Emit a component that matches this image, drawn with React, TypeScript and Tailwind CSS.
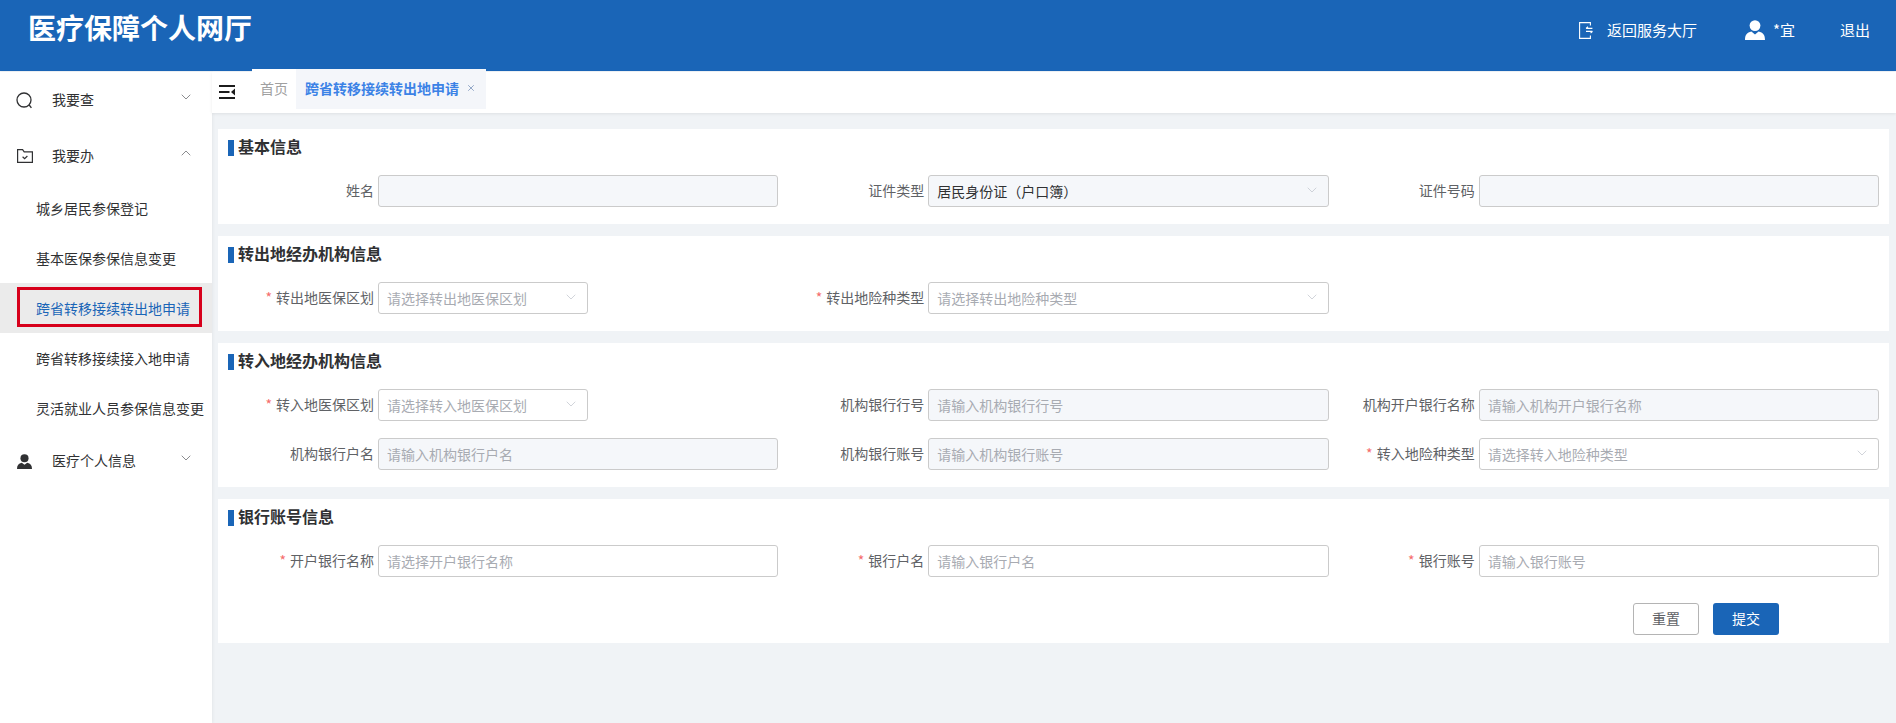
import { ChevronDown, ChevronUp, X } from "lucide-react";

const font = { fontFamily: '"Noto Sans CJK SC", "Noto Sans", sans-serif' };

function SearchIcon() {
  return (
    <svg viewBox="0 0 17 17" className="h-[17px] w-[17px]" fill="none" stroke="#303133" strokeWidth="1.3">
      <circle cx="8" cy="8" r="7" />
      <path d="M13.2 13 15.4 15.8" />
    </svg>
  );
}

function FolderIcon() {
  return (
    <svg viewBox="0 0 16 14" className="h-[14px] w-4" fill="none" stroke="#303133" strokeWidth="1.2">
      <path d="M.6.6h5l1.6 2.2h8.2v10.6H.6z" />
      <path d="m5.6 7.8 2 1.8 2.8-2.6" />
    </svg>
  );
}

function PersonIcon({ className }: { className: string }) {
  return (
    <svg viewBox="0 0 20 20" className={className} fill="currentColor">
      <circle cx="10" cy="5.6" r="5.4" />
      <path d="M0 20c0-5 2-7.4 6.4-8.4L10 14.4l3.6-2.8C18 12.6 20 15 20 20z" />
    </svg>
  );
}

function ReturnIcon() {
  return (
    <svg viewBox="0 0 14 17" className="h-[17px] w-[14px]" fill="none" stroke="#fff" strokeWidth="1.1">
      <path d="M11.4 3.4V.6H.6v15.8h10.8v-2.8" />
      <path d="M7 6.4h6.4M13.4 9.4H7M9 4.8 7 6.4M11.6 11l2-1.6" />
    </svg>
  );
}

function MenuToggle() {
  return (
    <svg viewBox="0 0 16 14" className="h-[14px] w-4" fill="#1c1c1c">
      <rect width="16" height="2" />
      <rect y="6" width="10.5" height="2" />
      <rect y="12" width="16" height="2" />
      <path d="M16 3.6v6.8l-4-3.4z" />
    </svg>
  );
}

function MenuGroup({ icon, label, open }: { icon: React.ReactNode; label: string; open?: boolean }) {
  return (
    <div className="flex h-14 items-center text-sm text-[#303133]">
      <div className="flex w-[52px] justify-center pr-[3px]">{icon}</div>
      <span className="flex-1 pb-[2px]">{label}</span>
      {open ? (
        <ChevronUp className="mr-[18px] h-4 w-4 -translate-y-[3px] text-[#606266]" strokeWidth={1.1} />
      ) : (
        <ChevronDown className="mr-[18px] h-4 w-4 -translate-y-[3px] text-[#606266]" strokeWidth={1.1} />
      )}
    </div>
  );
}

function SubItem({ label, active }: { label: string; active?: boolean }) {
  return (
    <div
      className={
        active
          ? "relative flex h-[50px] items-center bg-[#ebebeb] pl-9 text-sm text-[#1a65b7]"
          : "flex h-[50px] items-center pl-9 text-sm text-[#303133]"
      }
    >
      {label}
      {active && <div className="absolute left-[17px] top-[4px] h-[40px] w-[185px] border-[3px] border-[#d7001b]" />}
    </div>
  );
}

function Field({
  label,
  required,
  placeholder,
  value,
  disabled,
  select,
  narrow,
}: {
  label: string;
  required?: boolean;
  placeholder?: string;
  value?: string;
  disabled?: boolean;
  select?: boolean;
  narrow?: boolean;
}) {
  return (
    <div className="flex items-center">
      <label className="h-8 w-[150px] shrink-0 pr-[4px] text-right text-sm leading-[30px] text-[#606266]">
        {required && <span className="mr-1 text-[#f56c6c]">*</span>}
        {label}
      </label>
      <div
        className={`flex h-8 items-center rounded-[3px] border border-[#cbcbcb] pl-2 pr-2 text-sm ${
          narrow ? "w-[210px]" : "flex-1"
        } ${disabled ? "bg-[#f5f7fa]" : "bg-white"}`}
      >
        <span className={`flex-1 truncate ${value ? "text-[#303133]" : "text-[#a8abb2]"}`}>{value || placeholder}</span>
        {select && <ChevronDown className="h-4 w-4 -translate-y-px text-[#c0c4cc]" strokeWidth={1.1} />}
      </div>
    </div>
  );
}

function Section({ title, children, last }: { title: string; children: React.ReactNode; last?: boolean }) {
  return (
    <section className={`bg-white px-[10px] ${last ? "pb-[8px]" : "pb-[17px]"}`}>
      <div className="flex h-[46px] items-start pt-[11px]">
        <i className="mr-1 h-4 w-[6px] bg-[#1a65b7]" />
        <h3 className="-mt-[2px] text-base font-bold leading-4 text-[#303133]">{title}</h3>
      </div>
      <div className="grid grid-cols-3 gap-y-[17px]">{children}</div>
    </section>
  );
}

export default function App() {
  return (
    <div className="flex h-screen w-full flex-col overflow-hidden bg-[#f0f3f6]" style={font}>
      <header className="flex h-[71px] shrink-0 items-start justify-between bg-[#1a65b7] text-white">
        <h1 className="ml-[28px] mt-[9px] text-[28px] font-bold leading-9">医疗保障个人网厅</h1>
        <div className="mt-[20px] flex items-center text-[15px] leading-5">
          <ReturnIcon />
          <span className="ml-[14px]">返回服务大厅</span>
          <span className="ml-[48px]">
            <PersonIcon className="h-5 w-5 text-white" />
          </span>
          <span className="ml-[8px]">*宜</span>
          <span className="ml-[45px] mr-[26px]">退出</span>
        </div>
      </header>

      <div className="flex min-h-0 flex-1 pt-px">
        <aside className="w-[212px] shrink-0 bg-white shadow-[1px_0_3px_rgba(0,0,0,0.05)]">
          <MenuGroup icon={<SearchIcon />} label="我要查" />
          <MenuGroup icon={<FolderIcon />} label="我要办" open />
          <div className="-mt-[1px]">
            <SubItem label="城乡居民参保登记" />
            <SubItem label="基本医保参保信息变更" />
            <SubItem label="跨省转移接续转出地申请" active />
            <SubItem label="跨省转移接续接入地申请" />
            <SubItem label="灵活就业人员参保信息变更" />
          </div>
          <MenuGroup icon={<PersonIcon className="h-[15px] w-[15px] text-[#303133]" />} label="医疗个人信息" />
        </aside>

        <main className="flex min-w-0 flex-1 flex-col">
          <div className="flex h-[41px] shrink-0 items-start bg-white shadow-[0_1px_3px_rgba(0,0,0,0.08)]">
            <div className="ml-[7px] mt-[13px] w-[33px]">
              <MenuToggle />
            </div>
            <div className="-mt-[3px] flex h-[40px] items-center bg-white text-sm">
              <span className="w-[44px] pb-[2px] text-center text-[#a0a0a0]">首页</span>
              <span className="flex h-full w-[190px] items-center justify-between bg-[#f4f6fa] pb-[2px] pl-[9px] pr-[10px] font-bold text-[#3b82e6]">
                跨省转移接续转出地申请
                <X className="h-[10px] w-[10px] text-[#7f97bd]" strokeWidth={2} />
              </span>
            </div>
          </div>

          <div className="flex flex-col gap-3 pl-[6px] pr-[7px] pt-[16px]">
            <Section title="基本信息">
              <Field label="姓名" disabled />
              <Field label="证件类型" value="居民身份证（户口簿）" disabled select />
              <Field label="证件号码" disabled />
            </Section>

            <Section title="转出地经办机构信息">
              <Field label="转出地医保区划" required placeholder="请选择转出地医保区划" select narrow />
              <Field label="转出地险种类型" required placeholder="请选择转出地险种类型" select />
            </Section>

            <Section title="转入地经办机构信息">
              <Field label="转入地医保区划" required placeholder="请选择转入地医保区划" select narrow />
              <Field label="机构银行行号" placeholder="请输入机构银行行号" disabled />
              <Field label="机构开户银行名称" placeholder="请输入机构开户银行名称" disabled />
              <Field label="机构银行户名" placeholder="请输入机构银行户名" disabled />
              <Field label="机构银行账号" placeholder="请输入机构银行账号" disabled />
              <Field label="转入地险种类型" required placeholder="请选择转入地险种类型" select />
            </Section>

            <Section title="银行账号信息" last>
              <Field label="开户银行名称" required placeholder="请选择开户银行名称" />
              <Field label="银行户名" required placeholder="请输入银行户名" />
              <Field label="银行账号" required placeholder="请输入银行账号" />
              <div className="col-span-3 mt-[9px] flex justify-end gap-[14px] pr-[100px]">
                <button className="h-8 w-[66px] rounded-[3px] border border-[#b4b4b4] bg-white pb-[2px] text-sm text-[#606266]">重置</button>
                <button className="h-8 w-[66px] rounded-[3px] bg-[#1a65b7] pb-[2px] text-sm text-white">提交</button>
              </div>
            </Section>
          </div>
        </main>
      </div>
    </div>
  );
}
